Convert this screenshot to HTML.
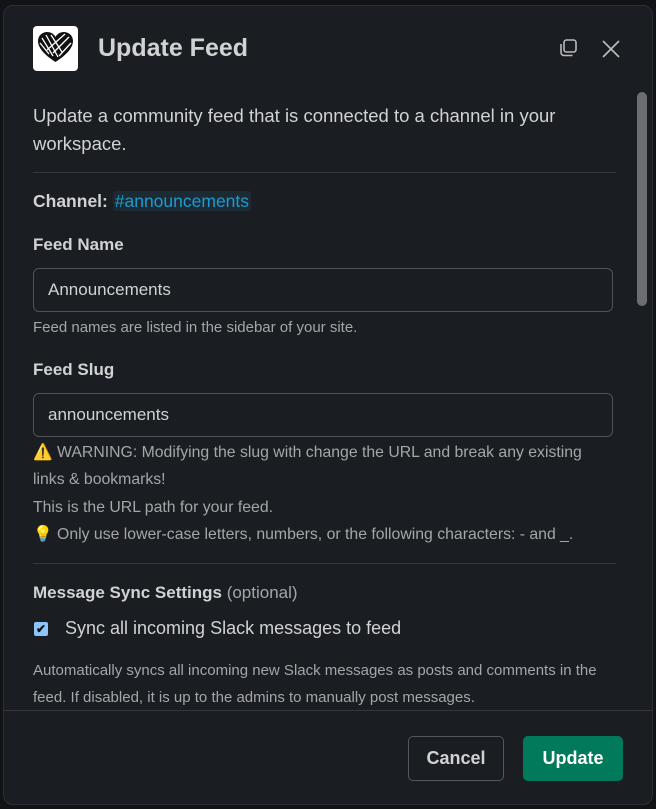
<!DOCTYPE html>
<html><head><style>
*{box-sizing:border-box;margin:0;padding:0}
body{width:656px;height:809px;background:#121315;font-family:"Liberation Sans",sans-serif;color:#d1d2d3;position:relative;overflow:hidden}
.m{position:absolute;left:3px;top:5px;width:650px;height:800px;background:#1a1d21;border:1px solid #2c2e33;border-radius:10px;overflow:hidden}
.a{position:absolute;white-space:nowrap}
.sep{position:absolute;left:29px;width:583px;height:1px;background:#35373b}
.inp{position:absolute;left:29px;width:580px;height:44px;border:1px solid #50525a;border-radius:6px;padding:0 14px;line-height:42px;font-size:17px;color:#d1d2d3}
.lab{font-size:17px;font-weight:bold;color:#d1d2d3}
.sm{font-size:15px;color:#a4a6a9}
</style></head><body>
<div class="m">
<div class="a" style="left:29px;top:20px;width:45px;height:45px;background:#fff;border-radius:4px">
<svg width="45" height="45" viewBox="0 0 45 45"><path d="M22.5 36 C10 28 5 21 5 15 C5 9 10 6 14 6 C18 6 21 8 22.5 11 C24 8 27 6 31 6 C35 6 40 9 40 15 C40 21 35 28 22.5 36Z" fill="#111"/><g stroke="#fff" stroke-width="1.3" fill="none"><path d="M9 12 L20 30"/><path d="M13 9 L25 31"/><path d="M18 9 L29 26"/><path d="M36 11 L20 27"/><path d="M32 8 L14 24"/><path d="M38 17 L26 30"/><path d="M7 17 L16 28"/></g></svg></div>
<div class="a" style="left:94px;top:28px;font-size:25px;font-weight:bold;color:#d1d2d3">Update Feed</div>
<svg class="a" style="left:553px;top:31px" width="22" height="22" viewBox="0 0 22 22" fill="none" stroke="#b9babd" stroke-width="1.6"><rect x="7" y="3" width="12" height="12" rx="2.5"/><path d="M4 7v8.5A3 3 0 0 0 7 18.5h8.5"/></svg>
<svg class="a" style="left:596px;top:32px" width="22" height="22" viewBox="0 0 22 22" stroke="#b9babd" stroke-width="1.7"><path d="M3 3L19 19M19 3L3 19"/></svg>
<div class="a" style="left:633px;top:86px;width:10px;height:214px;background:#6b6d71;border-radius:5px"></div>
<div class="a" style="left:29px;top:96px;font-size:18.5px;line-height:28px;white-space:normal;width:570px">Update a community feed that is connected to a channel in your workspace.</div>
<div class="sep" style="top:166px"></div>
<div class="a" style="left:29px;top:185px;font-size:17.5px"><b>Channel:</b> <span style="color:#1d9bd1;background:#1c2a33;border-radius:3px;padding:0 2px">#announcements</span></div>
<div class="a lab" style="left:29px;top:229px">Feed Name</div>
<div class="inp" style="top:262px">Announcements</div>
<div class="a" style="left:29px;top:313px;font-size:15px;color:#a4a6a9">Feed names are listed in the sidebar of your site.</div>
<div class="a lab" style="left:29px;top:354px">Feed Slug</div>
<div class="inp" style="top:387px">announcements</div>
<div class="a sm" style="left:29px;top:433px;font-size:15.8px;line-height:27.3px;white-space:normal;width:565px">⚠️ WARNING: Modifying the slug with change the URL and break any existing links &amp; bookmarks!<br>This is the URL path for your feed.<br>💡 Only use lower-case letters, numbers, or the following characters: - and _.</div>
<div class="sep" style="top:557px"></div>
<div class="a lab" style="left:29px;top:577px">Message Sync Settings <span style="font-weight:normal;color:#a4a6a9">(optional)</span></div>
<div class="a" style="left:30px;top:616px;width:14px;height:14px;background:#8ec5f8;border-radius:2px;color:#111;font-size:12px;line-height:14px;text-align:center;font-weight:bold">✔</div>
<div class="a" style="left:61px;top:612px;font-size:18px">Sync all incoming Slack messages to feed</div>
<div class="a sm" style="left:29px;top:651px;line-height:27px;white-space:normal;width:580px">Automatically syncs all incoming new Slack messages as posts and comments in the feed. If disabled, it is up to the admins to manually post messages.</div>
<div class="a" style="left:0;top:704px;width:650px;height:1px;background:#35373b"></div>
<div class="a" style="left:404px;top:730px;width:96px;height:45px;border:1px solid #55575c;border-radius:5px;text-align:center;line-height:43px;font-size:18px;font-weight:bold">Cancel</div>
<div class="a" style="left:519px;top:730px;width:100px;height:45px;background:#007a5a;border-radius:5px;text-align:center;line-height:45px;font-size:18px;font-weight:bold;color:#fff">Update</div>
</div>
</body></html>
